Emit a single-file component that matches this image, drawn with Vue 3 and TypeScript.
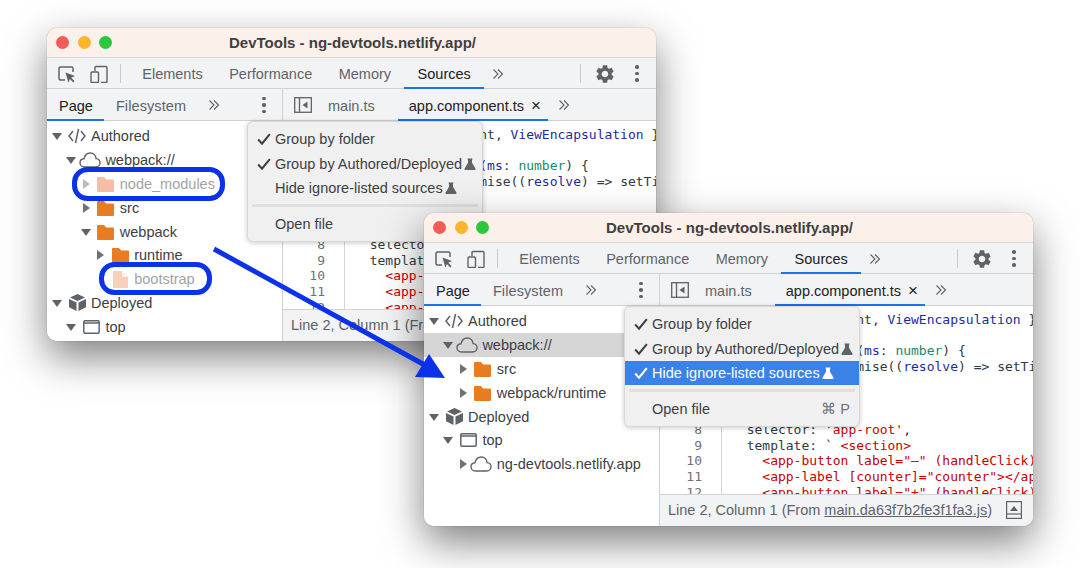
<script setup lang="ts">
type Row = { level: number; arrow: 'down' | 'right' | 'none'; icon: string; label: string; dim?: boolean; selected?: boolean }
type Tok = [string, string?]

const authored: Row = { level: 0, arrow: 'down', icon: 'code', label: 'Authored' }
const deployed: Row = { level: 0, arrow: 'down', icon: 'cube', label: 'Deployed' }
const top: Row = { level: 1, arrow: 'down', icon: 'frame', label: 'top' }

const windows: { id: string; shortcut: boolean; hideChecked: boolean; rows: Row[] }[] = [
  {
    id: 'one',
    shortcut: false,
    hideChecked: false,
    rows: [
      authored,
      { level: 1, arrow: 'down', icon: 'cloud', label: 'webpack://' },
      { level: 2, arrow: 'right', icon: 'folder', label: 'node_modules', dim: true },
      { level: 2, arrow: 'right', icon: 'folder', label: 'src' },
      { level: 2, arrow: 'down', icon: 'folder', label: 'webpack' },
      { level: 3, arrow: 'right', icon: 'folder', label: 'runtime' },
      { level: 3, arrow: 'none', icon: 'file', label: 'bootstrap', dim: true },
      deployed,
      top,
    ],
  },
  {
    id: 'two',
    shortcut: true,
    hideChecked: true,
    rows: [
      authored,
      { level: 1, arrow: 'down', icon: 'cloud', label: 'webpack://', selected: true },
      { level: 2, arrow: 'right', icon: 'folder', label: 'src' },
      { level: 2, arrow: 'right', icon: 'folder', label: 'webpack/runtime' },
      deployed,
      top,
      { level: 2, arrow: 'right', icon: 'cloud', label: 'ng-devtools.netlify.app' },
    ],
  },
]

const mainTabs = ['Elements', 'Performance', 'Memory', 'Sources']
const lineNumbers = Array.from({ length: 12 }, (_, i) => i + 1)

const code: Tok[][] = [
  [['import', 'kw'], [' { Component, '], ['ViewEncapsulation', 'var'], [' } from '], ["'@angular/core'", 'str'], [';']],
  [],
  [['function', 'kw'], [' delayed('], ['ms', 'var'], [': '], ['number', 'type'], [') {']],
  [['  return new ', 'kw'], ['Promise'], ['(('], ['resolve', 'var'], [') => setTimeout('], ['resolve', 'var'], [', ms));']],
  [['}']],
  [],
  [['@Component({']],
  [['  selector: '], ["'app-root'", 'str'], [',']],
  [['  template: ` '], ['<section>', 'str']],
  [['    <app-button label="–" (handleClick)="onClick(-1)">', 'str']],
  [['    <app-label [counter]="counter"></app-label>', 'str']],
  [['    <app-button label="+" (handleClick)="onClick(1)">', 'str']],
]

function indent(level: number): string {
  return `${4 + level * 14.4}px`
}
</script>

<template>
  <div class="canvas">
    <svg class="defs" width="0" height="0" aria-hidden="true">
      <symbol id="i-cursor" viewBox="0 0 18 18">
        <path d="M7 15H2.500A1.500 1.500 0 0 1 1 13.500v-10A1.500 1.500 0 0 1 2.500 2h11A1.500 1.500 0 0 1 15 3.500V7" fill="none" stroke="currentColor" stroke-width="1.500" />
        <path d="M7.500 7.500l9.500 3.600-3.800 1.600 3.300 3.400-1.300 1.300-3.300-3.400-1.500 3.700z" fill="currentColor" />
      </symbol>
      <symbol id="i-device" viewBox="0 0 18 18">
        <path d="M6 1.500h10a1 1 0 0 1 1 1v14a1 1 0 0 1-1 1h-5M6 1.500a1 1 0 0 0-1 1V6" fill="none" stroke="currentColor" stroke-width="1.400" />
        <rect x="1" y="7" width="7.500" height="10.500" rx="1" fill="none" stroke="currentColor" stroke-width="1.400" />
      </symbol>
      <symbol id="i-gear" viewBox="0 0 24 24">
        <path fill="currentColor" d="M19.140 12.940c.04-.3.06-.61.06-.94 0-.32-.02-.64-.07-.94l2.030-1.580c.18-.14.23-.41.12-.61l-1.920-3.320c-.12-.22-.37-.29-.59-.22l-2.390.96c-.5-.38-1.030-.7-1.620-.94l-.36-2.540c-.04-.24-.24-.41-.48-.41h-3.840c-.24 0-.43.17-.47.41l-.36 2.540c-.59.24-1.130.57-1.620.94l-2.390-.96c-.22-.08-.47 0-.59.22L2.740 8.870c-.12.21-.08.47.12.61l2.030 1.580c-.05.3-.09.63-.09.94s.02.64.07.94l-2.030 1.580c-.18.14-.23.41-.12.61l1.920 3.320c.12.22.37.29.59.22l2.390-.96c.5.38 1.030.7 1.620.94l.36 2.54c.05.24.24.41.48.41h3.840c.24 0 .44-.17.47-.41l.36-2.54c.59-.24 1.130-.56 1.620-.94l2.390.96c.22.08.47 0 .59-.22l1.920-3.320c.12-.22.07-.47-.12-.61l-2.010-1.580zM12 15.600c-1.980 0-3.600-1.620-3.600-3.600s1.620-3.600 3.600-3.600 3.600 1.620 3.600 3.600-1.620 3.600-3.600 3.600z" />
      </symbol>
      <symbol id="i-panel" viewBox="0 0 18 16">
        <rect x=".7" y=".7" width="16.600" height="14.600" fill="none" stroke="currentColor" stroke-width="1.300" />
        <path d="M5.500 .7v14.600" stroke="currentColor" stroke-width="1.300" />
        <path d="M13.500 4.500v7L8.500 8z" fill="currentColor" />
      </symbol>
      <symbol id="i-more" viewBox="0 0 12 12">
        <path d="M1.500 1.500 6 6 1.500 10.500M6 1.500 10.500 6 6 10.500" fill="none" stroke="currentColor" stroke-width="1.100" />
      </symbol>
      <symbol id="i-check" viewBox="0 0 12 12">
        <path d="M1 6.500 4.300 10 11 1.800" fill="none" stroke="currentColor" stroke-width="1.800" />
      </symbol>
      <symbol id="i-flask" viewBox="0 0 12 12">
        <path d="M3.500 .5h5v1H8v3.300l3.500 6c.3.600 0 1.200-.7 1.200H1.200c-.7 0-1-.6-.7-1.200L4 4.800V1.500h-.5z" fill="currentColor" />
      </symbol>
      <symbol id="i-code" viewBox="0 0 18 16">
        <path d="M5 3 1 8l4 5M13 3l4 5-4 5M10.500 1 7.500 15" fill="none" stroke="currentColor" stroke-width="1.500" />
      </symbol>
      <symbol id="i-cloud" viewBox="0 0 22 16">
        <path d="M5.500 15C3 15 1 13.200 1 10.800c0-2.300 1.800-4 4-4.100C5.800 3.300 8.300 1 11.200 1c3.200 0 5.600 2.400 5.900 5.600 2.300.2 3.900 2 3.900 4.200 0 2.400-1.900 4.200-4.400 4.200z" fill="none" stroke="currentColor" stroke-width="1.400" />
      </symbol>
      <symbol id="i-folder" viewBox="0 0 17 16">
        <path d="M1 1h6l2.200 2.500H16a1 1 0 0 1 1 1V15a1 1 0 0 1-1 1H1a1 1 0 0 1-1-1V2a1 1 0 0 1 1-1z" fill="currentColor" />
      </symbol>
      <symbol id="i-file" viewBox="0 0 15 17">
        <path d="M1 0h8l6 6v10a1 1 0 0 1-1 1H1a1 1 0 0 1-1-1V1a1 1 0 0 1 1-1z" fill="currentColor" />
        <path d="M9 0v6h6z" fill="#fff" opacity=".65" />
      </symbol>
      <symbol id="i-cube" viewBox="0 0 17 17">
        <path d="M8.500 0 16 3.500 8.500 7 1 3.500zM0 5l7.500 3.500V17L0 13.200zM17 5 9.500 8.500V17l7.500-3.800z" fill="currentColor" />
      </symbol>
      <symbol id="i-frame" viewBox="0 0 17 14">
        <rect x=".8" y=".8" width="15.400" height="12.400" rx="1.200" fill="none" stroke="currentColor" stroke-width="1.500" />
        <path d="M1 3h15" stroke="currentColor" stroke-width="1.500" />
      </symbol>
      <symbol id="i-drawer" viewBox="0 0 16 18">
        <rect x=".6" y=".6" width="14.800" height="16.800" fill="none" stroke="currentColor" stroke-width="1.200" />
        <path d="M1 13h14" stroke="currentColor" stroke-width="1.200" />
        <path d="M8 5l4 5H4z" fill="currentColor" />
      </symbol>
    </svg>

    <section v-for="win in windows" :key="win.id" class="win" :class="win.id">
      <header class="title">
        <span class="light red"></span>
        <span class="light yellow"></span>
        <span class="light green"></span>
        <span class="title-text">DevTools - ng-devtools.netlify.app/</span>
      </header>

      <nav class="bar main-bar">
        <svg class="ico cursor"><use href="#i-cursor" /></svg>
        <svg class="ico device"><use href="#i-device" /></svg>
        <span class="sep"></span>
        <span v-for="t in mainTabs" :key="t" class="tab" :class="{ active: t === 'Sources' }">{{ t }}</span>
        <svg class="ico more after-sources"><use href="#i-more" /></svg>
        <span class="sep push"></span>
        <svg class="ico gear"><use href="#i-gear" /></svg>
        <span class="kebab main-kebab"><i></i><i></i><i></i></span>
      </nav>

      <nav class="bar sub-bar">
        <div class="side-tabs">
          <span class="tab active page">Page</span>
          <span class="tab fs">Filesystem</span>
          <svg class="ico more"><use href="#i-more" /></svg>
          <span class="kebab side-kebab"><i></i><i></i><i></i></span>
        </div>
        <div class="file-tabs">
          <svg class="ico panel"><use href="#i-panel" /></svg>
          <span class="tab file">main.ts</span>
          <span class="tab active current">app.component.ts<span class="close">×</span></span>
          <svg class="ico more"><use href="#i-more" /></svg>
        </div>
      </nav>

      <div class="body">
        <ul class="tree">
          <li
            v-for="row in win.rows"
            :key="row.label"
            class="row"
            :class="{ dim: row.dim, selected: row.selected }"
            :style="{ paddingLeft: indent(row.level) }"
          >
            <span class="tri" :class="row.arrow"></span>
            <span class="icon-box">
              <svg class="tree-ico" :class="`t-${row.icon}`"><use :href="`#i-${row.icon}`" /></svg>
            </span>
            <span class="label">{{ row.label }}</span>
          </li>
        </ul>

        <div class="editor">
          <div class="code-area">
            <div class="gutter">
              <div v-for="n in lineNumbers" :key="n" class="num">{{ n }}</div>
            </div>
            <div class="code-lines">
              <div v-for="(line, i) in code" :key="i" class="line">
                <span v-for="(tok, j) in line" :key="j" :class="tok[1]">{{ tok[0] }}</span>
              </div>
            </div>
          </div>
          <footer class="status">
            <span>Line 2, Column 1</span>
            <span class="from">(From <u>main.da63f7b2fe3f1fa3.js</u>)</span>
            <svg class="ico drawer"><use href="#i-drawer" /></svg>
          </footer>
        </div>
      </div>

      <div class="menu">
        <div class="item"><svg class="check"><use href="#i-check" /></svg><span>Group by folder</span></div>
        <div class="item"><svg class="check"><use href="#i-check" /></svg><span>Group by Authored/Deployed</span><svg class="flask"><use href="#i-flask" /></svg></div>
        <div class="item" :class="{ on: win.hideChecked }">
          <svg v-if="win.hideChecked" class="check"><use href="#i-check" /></svg>
          <span v-else class="check"></span>
          <span>Hide ignore-listed sources</span><svg class="flask"><use href="#i-flask" /></svg>
        </div>
        <div class="divider"></div>
        <div class="item">
          <span class="check"></span><span>Open file</span>
          <span v-if="win.shortcut" class="keys">⌘ P</span>
        </div>
      </div>
    </section>

    <svg class="overlay" width="1080" height="568" viewBox="0 0 1080 568">
      <rect x="74.500" y="169.500" width="148" height="29" rx="13" fill="none" stroke="#0b32ea" stroke-width="5" />
      <rect x="101.500" y="264.500" width="108" height="28" rx="13" fill="none" stroke="#0b32ea" stroke-width="5" />
      <path d="M214 249 L432 369" stroke="#0b32ea" stroke-width="5" fill="none" />
      <path d="M429 354 L445 378 L415 377 Z" fill="#0b32ea" />
    </svg>
  </div>
</template>

<style>
html,
body {
  margin: 0;
  background: #fff;
}
</style>

<style scoped>
.canvas {
  position: relative;
  width: 1080px;
  height: 568px;
  overflow: hidden;
  background: #fff;
  font-family: "Liberation Sans", Arial, sans-serif;
  font-size: 14.500px;
  color: #3c4043;
}
.defs {
  position: absolute;
}
.overlay {
  position: absolute;
  left: 0;
  top: 0;
  pointer-events: none;
}
.win {
  position: absolute;
  width: 609px;
  height: 313px;
  border-radius: 10px;
  background: #fff;
  display: flex;
  flex-direction: column;
  box-shadow: 0 16px 40px rgba(0, 0, 0, 0.5), 0 0 1px rgba(0, 0, 0, 0.5);
}
.one {
  left: 47px;
  top: 28px;
}
.two {
  left: 424px;
  top: 213px;
}
.title {
  height: 30px;
  box-sizing: border-box;
  flex: none;
  display: flex;
  align-items: center;
  position: relative;
  padding-left: 9px;
  gap: 8.500px;
  background: #fcf0ea;
  border-bottom: 1px solid #d9d9d9;
  border-radius: 10px 10px 0 0;
}
.light {
  width: 13px;
  height: 13px;
  border-radius: 50%;
}
.red {
  background: #f25c57;
}
.yellow {
  background: #fcb52c;
}
.green {
  background: #2cc63f;
}
.title-text {
  position: absolute;
  left: 182px;
  font-weight: 700;
  font-size: 15px;
  color: #3f3f3f;
}
.bar {
  flex: none;
  display: flex;
  align-items: center;
  box-sizing: border-box;
  background: #f1f3f4;
  border-bottom: 1px solid #cfd1d3;
}
.main-bar {
  height: 31px;
}
.sub-bar {
  height: 32px;
  align-items: stretch;
}
.ico {
  flex: none;
  color: #5f6368;
}
.cursor {
  width: 18px;
  height: 18px;
  margin: 1px 0 0 11px;
}
.device {
  width: 18px;
  height: 18px;
  margin: 1px 0 0 14px;
}
.sep {
  width: 1px;
  height: 19px;
  background: #c8cacc;
  margin: 1px 8px 0 12px;
}
.sep.push {
  margin-left: auto;
  margin-right: 0;
}
.tab {
  display: flex;
  align-items: center;
  align-self: stretch;
  padding: 2px 13.250px 0;
  color: #5f6368;
  box-sizing: border-box;
  white-space: nowrap;
}
.tab.active {
  color: #202124;
  box-shadow: 0 1px 0 #1a73e8, inset 0 -1px 0 #1a73e8;
}
.more {
  width: 12px;
  height: 12px;
  margin-top: 1px;
}
.after-sources {
  margin-left: 8px;
}
.gear {
  width: 22px;
  height: 22px;
  margin: 1px 0 0 12.500px;
}
.kebab {
  display: flex;
  flex-direction: column;
  gap: 3px;
  margin-top: 1px;
}
.kebab i {
  display: block;
  width: 3.500px;
  height: 3.500px;
  border-radius: 50%;
  background: #5f6368;
}
.main-kebab {
  margin-left: 19.750px;
  margin-right: 17.250px;
}
.side-tabs {
  width: 236px;
  flex: none;
  display: flex;
  align-items: center;
  box-sizing: border-box;
  border-right: 1px solid #cfd1d3;
}
.side-tabs .tab.page {
  padding: 2px 11px 0 12px;
}
.side-tabs .tab.fs {
  padding: 2px 12px 0;
  letter-spacing: 0.1px;
}
.side-tabs .more {
  margin-left: 10px;
}
.side-kebab {
  margin-left: auto;
  margin-right: 16.500px;
}
.file-tabs {
  flex: 1;
  display: flex;
  align-items: center;
}
.panel {
  width: 18px;
  height: 16px;
  margin: 1px 0 0 11px;
}
.tab.file {
  padding: 2px 11px 0 16px;
}
.tab.current {
  margin-left: 12px;
  padding: 2px 12px 0 11px;
  width: 150px;
}
.close {
  margin-left: 7px;
  font-size: 17px;
  line-height: 14px;
  color: #202124;
}
.file-tabs .more {
  margin-left: 10px;
}
.body {
  flex: 1;
  min-height: 0;
  display: flex;
  border-radius: 0 0 10px 10px;
  overflow: hidden;
}
.tree {
  width: 236px;
  flex: none;
  margin: 0;
  padding: 3.500px 0 0;
  list-style: none;
  overflow: hidden;
  box-sizing: border-box;
  border-right: 1px solid #cfd1d3;
  background: #fff;
}
.row {
  height: 23.800px;
  display: flex;
  align-items: center;
  white-space: nowrap;
  color: #3c4043;
}
.row.selected {
  background: #d6d6d6;
}
.row.dim .label {
  color: #a3a3a3;
}
.tri {
  width: 12px;
  height: 12px;
  flex: none;
  position: relative;
}
.tri.down::before {
  content: "";
  position: absolute;
  left: 1px;
  top: 3px;
  border-left: 5px solid transparent;
  border-right: 5px solid transparent;
  border-top: 7px solid #5f6368;
}
.tri.right::before {
  content: "";
  position: absolute;
  left: 3px;
  top: 1px;
  border-top: 5px solid transparent;
  border-bottom: 5px solid transparent;
  border-left: 7px solid #6e7276;
}
.row.dim .tri.right::before {
  border-left-color: #bdbdbd;
}
.icon-box {
  width: 28px;
  flex: none;
  display: flex;
  justify-content: center;
  align-items: center;
}
.tree-ico {
  color: #5f6368;
}
.t-code {
  width: 18px;
  height: 16px;
}
.t-cloud {
  width: 22px;
  height: 16px;
  margin-right: 3px;
}
.t-folder {
  width: 17px;
  height: 16px;
  color: #e67d22;
}
.row.dim .t-folder {
  color: #f5bca6;
}
.t-file {
  width: 15px;
  height: 17px;
  color: #f6d2bb;
}
.t-cube {
  width: 17px;
  height: 17px;
}
.t-frame {
  width: 17px;
  height: 14px;
}
.editor {
  flex: 1;
  min-width: 0;
  display: flex;
  flex-direction: column;
  background: #fff;
}
.code-area {
  flex: 1;
  min-height: 0;
  display: flex;
  overflow: hidden;
  font-family: "DejaVu Sans Mono", monospace;
  font-size: 13px;
  line-height: 15.700px;
  box-sizing: border-box;
}
.gutter {
  width: 62px;
  flex: none;
  box-sizing: border-box;
  padding: 6px 19px 0 0;
  text-align: right;
  color: #6e7276;
  border-right: 1px solid #d5d7d9;
}
.code-lines {
  flex: 1;
  min-width: 0;
  padding: 6px 0 0 9px;
  white-space: pre;
  color: #303942;
  overflow: hidden;
}
.line {
  height: 15.700px;
}
.kw {
  color: #8e1fa8;
}
.var {
  color: #1c2a9e;
}
.type {
  color: #1a8a6e;
}
.str {
  color: #c80000;
}
.status {
  height: 32px;
  flex: none;
  display: flex;
  align-items: center;
  box-sizing: border-box;
  padding: 0 0 1px 8px;
  background: #f1f3f4;
  border-top: 1px solid #cfd1d3;
  color: #5f6368;
  white-space: nowrap;
}
.from {
  margin-left: 4px;
}
.drawer {
  width: 16px;
  height: 18px;
  margin-left: auto;
  margin-right: 11px;
}
.menu {
  position: absolute;
  left: 200px;
  top: 93px;
  width: 236px;
  height: 121px;
  box-sizing: border-box;
  background: #f0f0f0;
  border: 1px solid #d8d8d8;
  border-radius: 6px;
  padding-top: 5px;
  box-shadow: 0 1px 5px rgba(0, 0, 0, 0.22);
  color: #3c4043;
}
.item {
  height: 24.400px;
  display: flex;
  align-items: center;
  padding-left: 8.500px;
  white-space: nowrap;
}
.item.on {
  background: #3a82e6;
  color: #fff;
}
.check {
  width: 14px;
  height: 14px;
  flex: none;
  margin-right: 4.500px;
  color: #3c4043;
}
.on .check,
.on .flask {
  color: #fff;
}
.flask {
  width: 12px;
  height: 12px;
  margin-left: 2px;
  flex: none;
  color: #5f6368;
}
.divider {
  height: 3px;
  margin: 3.500px 4px 5px;
  background: #e0e0e0;
}
.keys {
  margin-left: auto;
  margin-right: 9px;
  color: #6e7276;
}
</style>
